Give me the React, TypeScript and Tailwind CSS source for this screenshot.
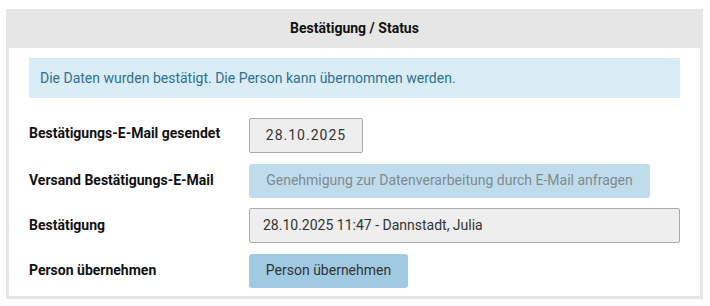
export default function App() {
  return (
    <div className="w-[710px] h-[306px] bg-white pt-[9px] pl-[6px]" style={{ fontFamily: "Roboto, 'Liberation Sans', sans-serif" }}>
      <div className="w-[697px] border-[3px] border-t-0 border-[#e6e6e6] bg-white">
        <div className="h-[39px] bg-[#e6e6e6] flex items-center justify-center text-[14px] font-bold text-[#111]">
          Bestätigung / Status
        </div>
        <div className="pt-[10px] pl-[20px] pr-[20px] pb-[8px]">
          <div className="h-[40px] bg-[#d9edf7] text-[#31708f] text-[14px] flex items-center pl-[11px]">
            Die Daten wurden bestätigt. Die Person kann übernommen werden.
          </div>
          <div className="mt-[20px] flex flex-col gap-[10.5px]">
            <div className="flex items-center h-[35px]">
              <div className="w-[220px] text-[14px] font-bold text-[#111] -mt-[4px]">Bestätigungs-E-Mail gesendet</div>
              <div className="w-[114px] h-[35px] bg-[#eeeeee] border border-[#aaaaaa] rounded-[2px] flex items-center justify-center text-[14px] text-[#333] tracking-[1px]">
                28.10.2025
              </div>
            </div>
            <div className="flex items-center h-[34px]">
              <div className="w-[220px] text-[14px] font-bold text-[#111]">Versand Bestätigungs-E-Mail</div>
              <div className="w-[401px] h-[34px] bg-[#bfdcec] rounded-[3px] flex items-center justify-center text-[14px] text-[#7f8a90]">
                Genehmigung zur Datenverarbeitung durch E-Mail anfragen
              </div>
            </div>
            <div className="flex items-center h-[35px]">
              <div className="w-[220px] text-[14px] font-bold text-[#111]">Bestätigung</div>
              <div className="w-[431px] h-[35px] bg-[#eeeeee] border border-[#aaaaaa] rounded-[2px] flex items-center pl-[13px] text-[14px] text-[#333]">
                28.10.2025 11:47 - Dannstadt, Julia
              </div>
            </div>
            <div className="flex items-center h-[34px]">
              <div className="w-[220px] text-[14px] font-bold text-[#111]">Person übernehmen</div>
              <div className="w-[159px] h-[34px] bg-[#9fcae2] rounded-[3px] flex items-center justify-center text-[14px] text-[#333]">
                Person übernehmen
              </div>
            </div>
          </div>
        </div>
      </div>
    </div>
  );
}
